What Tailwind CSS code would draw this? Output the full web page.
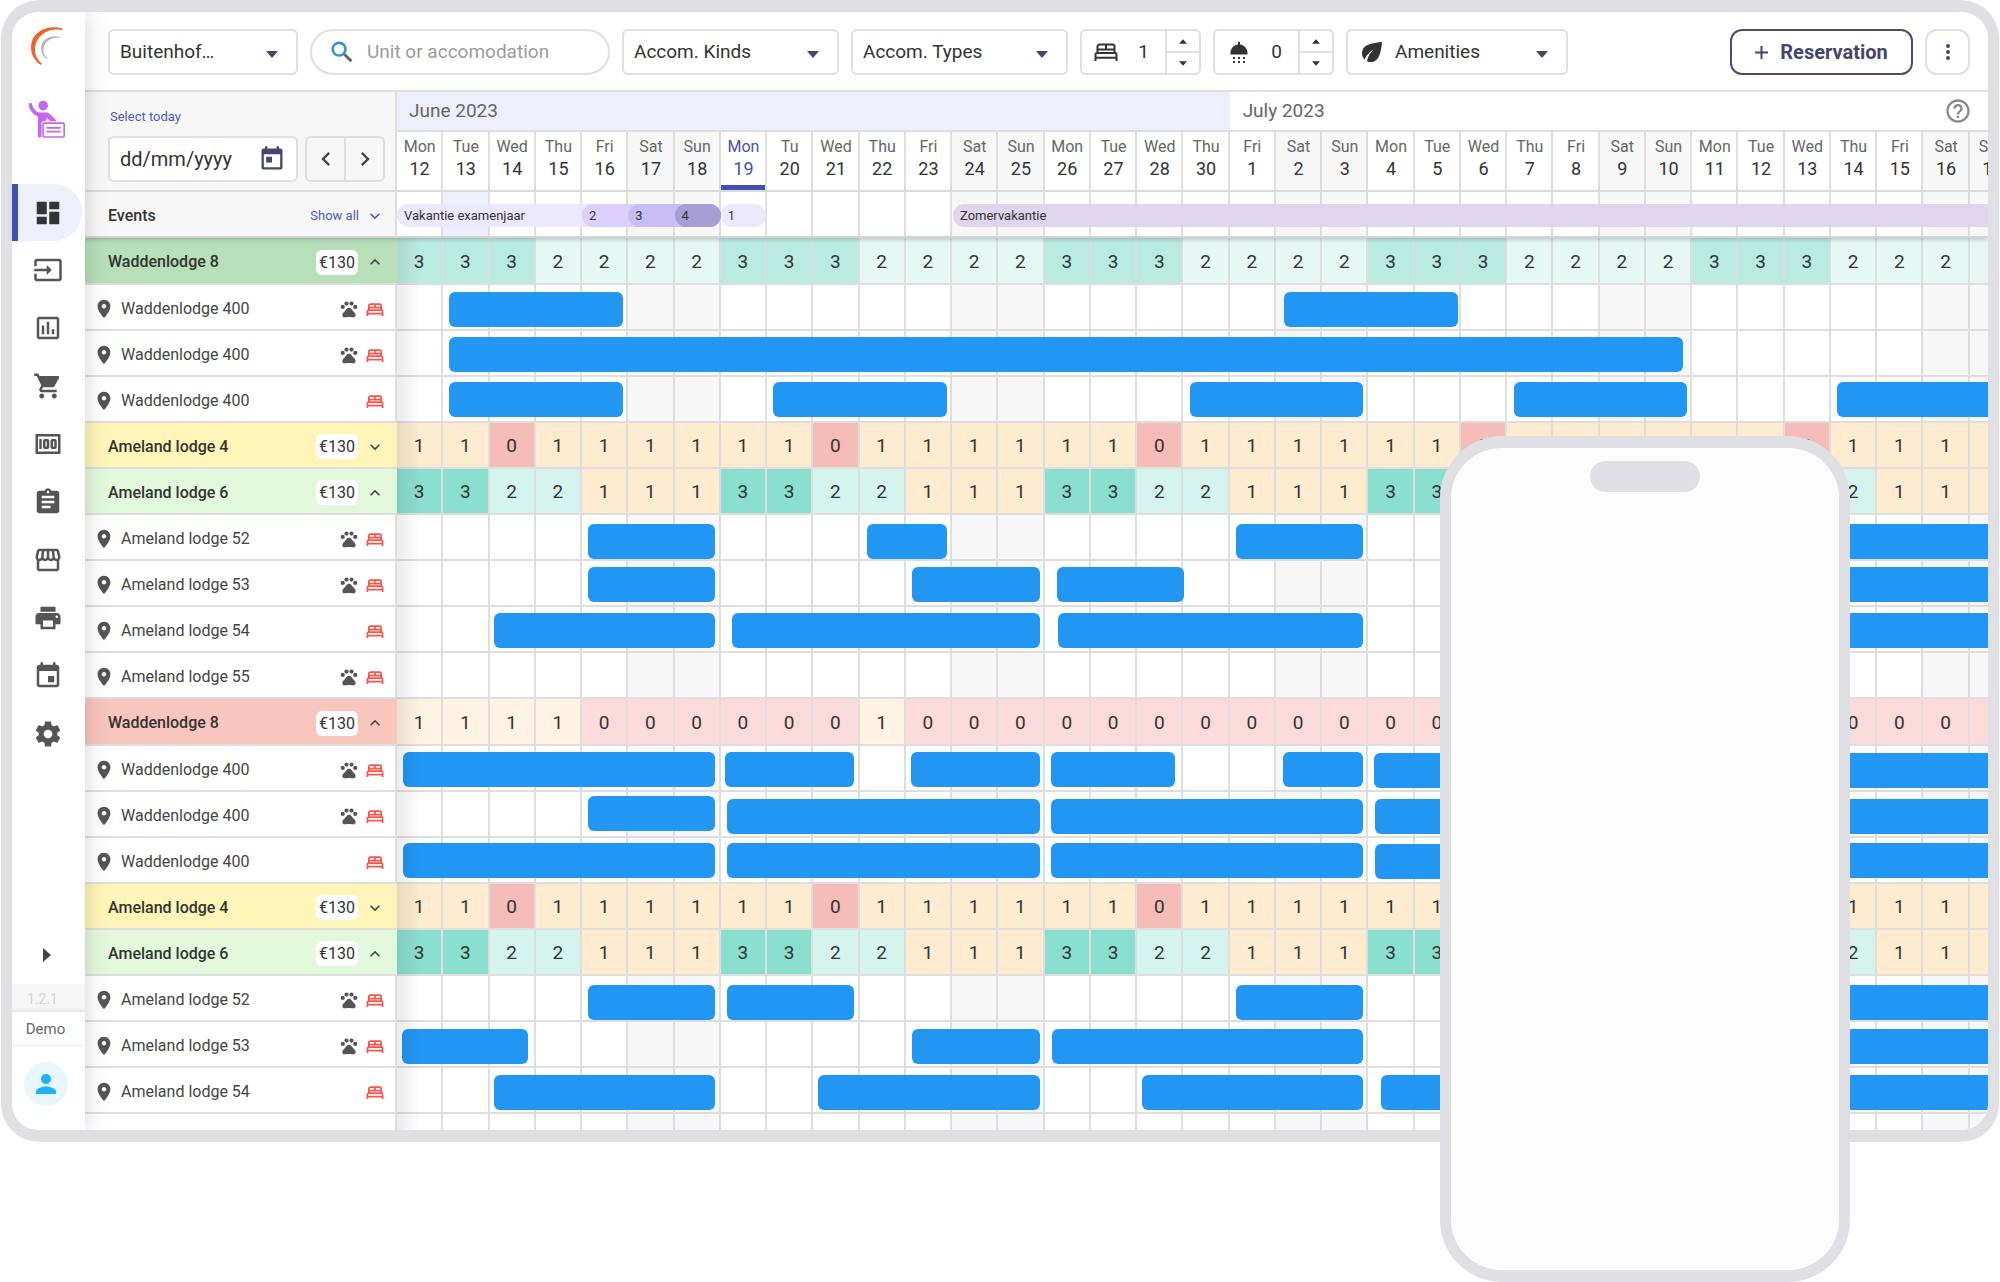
<!DOCTYPE html>
<html lang="en">
<head>
    <meta charset="UTF-8">
    <meta name="viewport" content="width=device-width, initial-scale=1.0">
    <title>Planboard</title>
    <script src="https://cdn.jsdelivr.net/npm/@tailwindcss/browser@4"></script>
</head>
<body class="relative min-h-[1282px] overflow-x-hidden bg-white font-['Roboto',sans-serif] text-[#333]">

    <!-- Icon sprite -->
    <svg class="hidden">
        <symbol id="i-dashboard" viewBox="0 0 24 24"><path d="M3 13h8V3H3v10zm0 8h8v-6H3v6zm10 0h8V11h-8v10zm0-18v6h8V3h-8z"/></symbol>
        <symbol id="i-input" viewBox="0 0 24 24"><path d="M21 3.01H3c-1.1 0-2 .9-2 2V9h2V4.99h18v14.03H3V15H1v4.01c0 1.1.9 1.98 2 1.98h18c1.1 0 2-.88 2-1.98v-14c0-1.11-.9-2-2-2zM11 16l4-4-4-4v3H1v2h10v3z"/></symbol>
        <symbol id="i-chart" viewBox="0 0 24 24"><path d="M9 17H7v-7h2v7zm4 0h-2V7h2v10zm4 0h-2v-4h2v4zm2 2H5V5h14v14zm0-16H5c-1.1 0-2 .9-2 2v14c0 1.1.9 2 2 2h14c1.1 0 2-.9 2-2V5c0-1.1-.9-2-2-2z"/></symbol>
        <symbol id="i-cart" viewBox="0 0 24 24"><path d="M7 18c-1.1 0-1.99.9-1.99 2S5.9 22 7 22s2-.9 2-2-.9-2-2-2zM1 2v2h2l3.6 7.59-1.35 2.45c-.16.28-.25.61-.25.96 0 1.1.9 2 2 2h12v-2H7.42c-.14 0-.25-.11-.25-.25l.03-.12.9-1.63h7.45c.75 0 1.41-.41 1.75-1.03l3.58-6.49A1.003 1.003 0 0 0 20 4H5.21l-.94-2H1zm16 16c-1.1 0-1.99.9-1.99 2s.89 2 1.99 2 2-.9 2-2-.9-2-2-2z"/></symbol>
        <symbol id="i-money" viewBox="0 0 24 24"><rect x="3" y="5" width="18" height="14" fill="none" stroke="currentColor" stroke-width="2"/><rect x="5" y="8" width="2" height="8"/><rect x="9" y="9" width="3" height="6" rx=".4" fill="none" stroke="currentColor" stroke-width="2"/><rect x="15" y="9" width="3" height="6" rx=".4" fill="none" stroke="currentColor" stroke-width="2"/></symbol>
        <symbol id="i-clipboard" viewBox="0 0 24 24"><path d="M19 3h-4.18C14.4 1.84 13.3 1 12 1c-1.3 0-2.4.84-2.82 2H5c-1.1 0-2 .9-2 2v14c0 1.1.9 2 2 2h14c1.1 0 2-.9 2-2V5c0-1.1-.9-2-2-2zm-7 0c.55 0 1 .45 1 1s-.45 1-1 1-1-.45-1-1 .45-1 1-1zm2 14H7v-2h7v2zm3-4H7v-2h10v2zm0-4H7V7h10v2z"/></symbol>
        <symbol id="i-store" viewBox="0 0 24 24"><path d="M21.9 8.89l-1.05-4.37c-.22-.9-1-1.52-1.91-1.52H5.05c-.9 0-1.69.63-1.9 1.52L2.1 8.89c-.24 1.02-.02 2.06.62 2.88.08.11.19.19.28.29V19c0 1.1.9 2 2 2h14c1.1 0 2-.9 2-2v-6.94c.09-.09.2-.18.28-.28.64-.82.87-1.87.62-2.89zm-2.99-3.9l1.05 4.37c.1.42.01.84-.25 1.17-.14.18-.44.47-.94.47-.61 0-1.14-.49-1.21-1.14L16.98 5l1.93-.01zM13 5h1.96l.54 4.52c.05.39-.07.78-.33 1.07-.22.26-.54.41-.95.41-.67 0-1.22-.59-1.22-1.31V5zM8.49 9.52L9.04 5H11v4.69c0 .72-.55 1.31-1.29 1.31-.34 0-.65-.15-.89-.41-.25-.29-.37-.68-.33-1.07zm-4.45-.16L5.05 5h1.97l-.58 4.86c-.08.65-.6 1.14-1.21 1.14-.49 0-.8-.29-.93-.47-.27-.32-.36-.75-.26-1.17zM5 19v-6.03c.08.01.15.03.23.03.87 0 1.66-.36 2.24-.95.6.6 1.4.95 2.31.95.87 0 1.65-.36 2.23-.93.59.57 1.39.93 2.29.93.84 0 1.64-.35 2.24-.95.58.59 1.37.95 2.24.95.08 0 .15-.02.23-.03V19H5z"/></symbol>
        <symbol id="i-print" viewBox="0 0 24 24"><path d="M19 8H5c-1.66 0-3 1.34-3 3v6h4v4h12v-4h4v-6c0-1.66-1.34-3-3-3zm-3 11H8v-5h8v5zm3-7c-.55 0-1-.45-1-1s.45-1 1-1 1 .45 1 1-.45 1-1 1zm-1-9H6v4h12V3z"/></symbol>
        <symbol id="i-event" viewBox="0 0 24 24"><path d="M17 12h-5v5h5v-5zM16 1v2H8V1H6v2H5c-1.11 0-1.99.9-1.99 2L3 19c0 1.1.89 2 2 2h14c1.1 0 2-.9 2-2V5c0-1.1-.9-2-2-2h-1V1h-2zm3 18H5V8h14v11z"/></symbol>
        <symbol id="i-today" viewBox="0 0 24 24"><path d="M19 3h-1V1h-2v2H8V1H6v2H5c-1.11 0-1.99.9-1.99 2L3 19c0 1.1.89 2 2 2h14c1.1 0 2-.9 2-2V5c0-1.1-.9-2-2-2zm0 16H5V8h14v11zM7 10h5v5H7z"/></symbol>
        <symbol id="i-settings" viewBox="0 0 24 24"><path d="M19.43 12.98c.04-.32.07-.64.07-.98s-.03-.66-.07-.98l2.11-1.65c.19-.15.24-.42.12-.64l-2-3.46c-.12-.22-.39-.3-.61-.22l-2.49 1c-.52-.4-1.08-.73-1.69-.98l-.38-2.65C14.46 2.18 14.25 2 14 2h-4c-.25 0-.46.18-.49.42l-.38 2.65c-.61.25-1.17.59-1.69.98l-2.49-1c-.23-.09-.49 0-.61.22l-2 3.46c-.13.22-.07.49.12.64l2.11 1.65c-.04.32-.07.65-.07.98s.03.66.07.98l-2.11 1.65c-.19.15-.24.42-.12.64l2 3.46c.12.22.39.3.61.22l2.49-1c.52.4 1.08.73 1.69.98l.38 2.65c.03.24.24.42.49.42h4c.25 0 .46-.18.49-.42l.38-2.65c.61-.25 1.17-.59 1.69-.98l2.49 1c.23.09.49 0 .61-.22l2-3.46c.12-.22.07-.49-.12-.64l-2.11-1.65zM12 15.5c-1.93 0-3.5-1.57-3.5-3.5s1.57-3.5 3.5-3.5 3.5 1.57 3.5 3.5-1.57 3.5-3.5 3.5z"/></symbol>
        <symbol id="i-person" viewBox="0 0 24 24"><path d="M12 12c2.21 0 4-1.79 4-4s-1.79-4-4-4-4 1.79-4 4 1.79 4 4 4zm0 2c-2.67 0-8 1.34-8 4v2h16v-2c0-2.66-5.33-4-8-4z"/></symbol>
        <symbol id="i-pin" viewBox="0 0 24 24"><path d="M12 2C8.13 2 5 5.13 5 9c0 5.25 7 13 7 13s7-7.75 7-13c0-3.87-3.13-7-7-7zm0 9.5c-1.38 0-2.5-1.12-2.5-2.5s1.12-2.5 2.5-2.5 2.5 1.12 2.5 2.5-1.12 2.5-2.5 2.5z"/></symbol>
        <symbol id="i-paw" viewBox="0 0 24 24"><circle cx="4.5" cy="9.5" r="2.5"/><circle cx="9" cy="5.5" r="2.5"/><circle cx="15" cy="5.5" r="2.5"/><circle cx="19.5" cy="9.5" r="2.5"/><path d="M17.34 14.86c-.87-1.02-1.6-1.89-2.48-2.91-.46-.54-1.05-1.08-1.75-1.32-.11-.04-.22-.07-.33-.09-.25-.04-.52-.04-.78-.04s-.53 0-.79.05c-.11.02-.22.05-.33.09-.7.24-1.28.78-1.75 1.32-.87 1.02-1.6 1.89-2.48 2.91-1.31 1.31-2.92 2.76-2.62 4.79.29 1.02 1.02 2.03 2.33 2.32.73.15 3.06-.44 5.54-.44h.18c2.48 0 4.81.58 5.54.44 1.31-.29 2.04-1.31 2.33-2.32.31-2.04-1.3-3.49-2.61-4.8z"/></symbol>
        <symbol id="i-bed" viewBox="0 0 24 18"><path fill="none" stroke="currentColor" d="M3.500 9V3.500a2 2 0 0 1 2-2h13a2 2 0 0 1 2 2V9M12 1.500v5M4.500 6.500h15M1.500 18v-6.500a1.500 1.500 0 0 1 1.500-1.500h18a1.500 1.500 0 0 1 1.500 1.500V18M1.500 14.800h21"/></symbol>
        <symbol id="i-shower" viewBox="0 0 24 24"><path d="M3.500 14.500v-1.500c0-4.500 3.200-8 7.500-8.600V2.500a1 1 0 0 1 2 0v1.900c4.300.6 7.500 4.100 7.500 8.600v1.500z"/><path d="M6 17h2v2H6zm5 0h2v2h-2zm5 0h2v2h-2zM6 21h2v2H6zm5 0h2v2h-2zm5 0h2v2h-2z"/></symbol>
        <symbol id="i-leaf" viewBox="0 0 24 24"><path d="M6.050 8.050c-2.730 2.730-2.730 7.150-.02 9.880 1.470-3.400 4.090-6.240 7.360-7.930-2.770 2.340-4.710 5.610-5.390 9.320 2.600 1.230 5.800.78 7.950-1.370C19.430 14.470 20 4 20 4S9.530 4.570 6.050 8.050z"/></symbol>
        <symbol id="i-help" viewBox="0 0 24 24"><path d="M11 18h2v-2h-2v2zm1-16C6.480 2 2 6.480 2 12s4.480 10 10 10 10-4.480 10-10S17.520 2 12 2zm0 18c-4.410 0-8-3.590-8-8s3.590-8 8-8 8 3.590 8 8-3.590 8-8 8zm0-14c-2.210 0-4 1.790-4 4h2c0-1.100.9-2 2-2s2 .9 2 2c0 2-3 1.750-3 5h2c0-2.250 3-2.500 3-5 0-2.210-1.790-4-4-4z"/></symbol>
        <symbol id="i-down" viewBox="0 0 24 24"><path d="M7.410 8.590 12 13.170l4.590-4.580L18 10l-6 6-6-6z"/></symbol>
        <symbol id="i-up" viewBox="0 0 24 24"><path d="M7.410 15.410 12 10.830l4.590 4.580L18 14l-6-6-6 6z"/></symbol>
        <symbol id="i-left" viewBox="0 0 24 24"><path d="M15.410 7.410 14 6l-6 6 6 6 1.410-1.410L10.830 12z"/></symbol>
        <symbol id="i-right" viewBox="0 0 24 24"><path d="M8.590 16.590 10 18l6-6-6-6-1.410 1.410L13.170 12z"/></symbol>
        <symbol id="i-caret" viewBox="0 0 12 7"><path d="M0 0h12L6 7z"/></symbol>
        <symbol id="i-caret-up" viewBox="0 0 12 7"><path d="M0 7h12L6 0z"/></symbol>
    </svg>

    <!-- Tablet frame -->
    <div class="mx-px flex overflow-hidden rounded-[38px] border-x-11 border-y-12 border-[#e0dfe4] bg-white">

        <!-- Sidebar -->
        <nav class="relative z-20 flex w-[73px] shrink-0 flex-col bg-white pt-[13px] shadow-[0_0_24px_rgba(0,0,0,0.18)]">
            <a href="#" aria-label="Home" class="flex h-[42px] justify-center pr-1">
                <svg class="h-[42px] w-[37px]" viewBox="50 40 110 125">
                    <path fill="#f4622c" d="M153 51C114 37 59 56 59 108c0 24 13 41 29 51l3-4C76 142 69 128 71 107 75 69 112 47 152 55z"/>
                    <path fill="#b5b5b5" d="M145 76c-31-9-56 8-56 34 0 15 8 27 18 32l1-2c-9-10-14-18-12-31 4-20 24-34 48-30z"/>
                </svg>
            </a>
            <a href="#" aria-label="Guide" class="mt-8 flex h-10 justify-center pr-1">
                <svg class="h-10 w-[38px] text-[#c765f0]" viewBox="50 260 115 117" fill="currentColor">
                    <circle cx="96" cy="278" r="14.500"/>
                    <path d="M52 271h10c2 14 9 24 22 28h24c6 2 11 7 27 23v3h-18l-9-10-4 10H96c-4 1-5 3-5 6v43H80v-63c-17-7-27-21-28-40z"/>
                    <rect x="95.500" y="331" width="64" height="42" rx="3" fill="none" stroke="currentColor" stroke-width="5"/>
                    <path d="M106 343h43v5h-43zm0 11h43v5h-43z"/>
                </svg>
            </a>
            <a href="#" aria-label="Planboard" class="mt-[45px] flex h-[57px] w-[70px] items-center justify-center rounded-r-full border-l-6 border-[#3f51b5] bg-[#edf0fa]">
                <svg class="mr-1 size-[30px] fill-[#333]"><use href="#i-dashboard"/></svg>
            </a>
            <div id="menu" class="flex flex-col pr-px text-[#555]"></div>
            <button aria-label="Expand menu" class="mt-auto flex h-[58px] items-center justify-center pr-1">
                <svg class="h-[14px] w-2 fill-[#444]" viewBox="0 0 8 14"><path d="M0 0l8 7-8 7z"/></svg>
            </button>
            <div class="flex h-7 items-center justify-center bg-[#f6f6f6] pt-px pr-3 text-sm text-[#d4d4d4] shadow-[inset_0_-4px_5px_-3px_rgba(0,0,0,0.1)]">1.2.1</div>
            <div class="flex h-[34px] items-center justify-center border-b border-[#eee] pt-px pr-[6px] text-[15px] text-[#666]">Demo</div>
            <div class="flex h-21 items-start justify-center pt-4 pr-[6px]">
                <button aria-label="Account" class="flex size-[44px] items-center justify-center rounded-full bg-[#e8f7ff]">
                    <svg class="size-[30px] fill-[#1fb1ff]"><use href="#i-person"/></svg>
                </button>
            </div>
        </nav>

        <main class="relative min-w-0 flex-1">
            <!-- Toolbar -->
            <header class="flex h-20 items-center gap-3 border-b-2 border-[#dedede] pt-[2px] pr-[18px] pl-[23px] text-[19px]">
                <label class="relative w-[190px]">
                    <select aria-label="Park" class="h-[46px] w-full appearance-none rounded-md border-2 border-[#dfdfdf] bg-white pl-[10px]"><option>Buitenhof…</option></select>
                    <svg class="pointer-events-none absolute top-[22px] right-5 h-[7px] w-3 fill-[#45466b]"><use href="#i-caret"/></svg>
                </label>
                <label class="flex h-[46px] w-[300px] items-center gap-[11px] rounded-full border-2 border-[#dfdfdf] pl-4">
                    <svg class="size-7 shrink-0" viewBox="0 0 24 24" fill="none">
                        <path stroke="#616161" stroke-width="2.500" d="M14 14l6 6"/>
                        <circle cx="9.500" cy="9.500" r="5.500" stroke="#2d94dc" stroke-width="2.200"/>
                    </svg>
                    <input type="search" aria-label="Search" placeholder="Unit or accomodation" class="w-full min-w-0 outline-none placeholder:text-[#9b9b9b]">
                </label>
                <label class="relative w-[217px]">
                    <select aria-label="Kinds" class="h-[46px] w-full appearance-none rounded-md border-2 border-[#dfdfdf] bg-white pl-[10px]"><option>Accom. Kinds</option></select>
                    <svg class="pointer-events-none absolute top-[22px] right-5 h-[7px] w-3 fill-[#45466b]"><use href="#i-caret"/></svg>
                </label>
                <label class="relative w-[217px]">
                    <select aria-label="Types" class="h-[46px] w-full appearance-none rounded-md border-2 border-[#dfdfdf] bg-white pl-[10px]"><option>Accom. Types</option></select>
                    <svg class="pointer-events-none absolute top-[22px] right-5 h-[7px] w-3 fill-[#45466b]"><use href="#i-caret"/></svg>
                </label>
                <div class="flex h-[46px] w-[121px] items-center rounded-md border-2 border-[#dfdfdf] pl-3">
                    <svg class="h-[18px] w-6 shrink-0 fill-current stroke-2"><use href="#i-bed"/></svg>
                    <input id="beds" type="text" inputmode="numeric" aria-label="Bedrooms" value="1" class="w-full min-w-0 pl-1 text-center outline-none">
                    <div class="flex h-full w-[34px] shrink-0 flex-col divide-y-2 divide-[#dfdfdf] border-l-2 border-[#dfdfdf]">
                        <button data-step="1" data-for="beds" aria-label="More bedrooms" class="flex flex-1 items-center justify-center"><svg class="h-[5px] w-2 fill-current"><use href="#i-caret-up"/></svg></button>
                        <button data-step="-1" data-for="beds" aria-label="Fewer bedrooms" class="flex flex-1 items-center justify-center"><svg class="h-[5px] w-2 fill-current"><use href="#i-caret"/></svg></button>
                    </div>
                </div>
                <div class="flex h-[46px] w-[121px] items-center rounded-md border-2 border-[#dfdfdf] pl-3">
                    <svg class="size-6 shrink-0 fill-current"><use href="#i-shower"/></svg>
                    <input id="baths" type="text" inputmode="numeric" aria-label="Bathrooms" value="0" class="w-full min-w-0 pl-1 text-center outline-none">
                    <div class="flex h-full w-[34px] shrink-0 flex-col divide-y-2 divide-[#dfdfdf] border-l-2 border-[#dfdfdf]">
                        <button data-step="1" data-for="baths" aria-label="More bathrooms" class="flex flex-1 items-center justify-center"><svg class="h-[5px] w-2 fill-current"><use href="#i-caret-up"/></svg></button>
                        <button data-step="-1" data-for="baths" aria-label="Fewer bathrooms" class="flex flex-1 items-center justify-center"><svg class="h-[5px] w-2 fill-current"><use href="#i-caret"/></svg></button>
                    </div>
                </div>
                <label class="relative w-[222px]">
                    <select aria-label="Amenities" class="h-[46px] w-full appearance-none rounded-md border-2 border-[#dfdfdf] bg-white pl-[47px]"><option>Amenities</option></select>
                    <svg class="pointer-events-none absolute top-2 left-[11px] size-[30px] fill-current"><use href="#i-leaf"/></svg>
                    <svg class="pointer-events-none absolute top-[22px] right-5 h-[7px] w-3 fill-[#45466b]"><use href="#i-caret"/></svg>
                </label>
                <button class="ml-auto flex h-[46px] w-[183px] items-center justify-center gap-3 rounded-xl border-2 border-[#4b4c70] text-xl font-bold text-[#45466b]">
                    <svg class="size-[13px]" viewBox="0 0 13 13"><path stroke="currentColor" stroke-width="2" d="M6.500 0v13M0 6.500h13"/></svg>
                    Reservation
                </button>
                <button aria-label="More" class="flex h-[46px] w-[45px] items-center justify-center rounded-xl border-2 border-[#dfdfdf]">
                    <svg class="h-4 w-1 fill-[#45466b]" viewBox="0 0 4 16"><circle cx="2" cy="2" r="2"/><circle cx="2" cy="8" r="2"/><circle cx="2" cy="14" r="2"/></svg>
                </button>
            </header>

            <!-- Date navigation and day header -->
            <div class="flex h-[100px]">
                <div class="flex w-[312px] shrink-0 flex-col gap-[11px] border-r-2 border-b-2 border-[#dedede] bg-[#f7f7f7] pt-[17px] pl-[23px]">
                    <label for="date" class="pl-[2px] text-[13px] leading-4 text-[#4a5cb8]">Select today</label>
                    <div class="flex gap-[7px]">
                        <div class="flex h-[46px] w-[190px] items-center rounded-md border-2 border-[#dfdfdf] bg-white pr-[10px] pl-[10px]">
                            <input id="date" type="text" placeholder="dd/mm/yyyy" class="w-full min-w-0 text-xl outline-none placeholder:text-[#333]">
                            <svg class="size-7 shrink-0 fill-[#45466b]"><use href="#i-today"/></svg>
                        </div>
                        <div class="flex h-[46px] w-20 divide-x-2 divide-[#dfdfdf] rounded-md border-2 border-[#dfdfdf]">
                            <button aria-label="Previous" class="flex flex-1 items-center justify-center"><svg class="size-7 fill-[#444]"><use href="#i-left"/></svg></button>
                            <button aria-label="Next" class="flex flex-1 items-center justify-center"><svg class="size-7 fill-[#444]"><use href="#i-right"/></svg></button>
                        </div>
                    </div>
                </div>
                <div class="min-w-0 flex-1 overflow-hidden">
                    <div class="-mr-7 grid h-10 grid-cols-35 border-b-2 border-[#dedede] text-[19px] text-[#666]">
                        <div class="col-span-18 flex items-center bg-[#edf0fa] pl-3">June 2023</div>
                        <div class="col-span-17 flex items-center justify-between pr-11 pl-[13px]">
                            July 2023
                            <button aria-label="Help"><svg class="size-7 fill-[#8a8a8a]"><use href="#i-help"/></svg></button>
                        </div>
                    </div>
                    <div id="days" class="-mr-7 grid h-[60px] grid-cols-35 border-b-2 border-[#dedede] text-center leading-[22px]"></div>
                </div>
            </div>

            <!-- Events -->
            <div class="relative z-10 flex h-[46px] shadow-[0_2px_4px_rgba(0,0,0,0.18)]">
                <div class="flex w-[312px] shrink-0 items-center justify-between border-r-2 border-b-2 border-[#d4d4d4] border-r-[#dedede] bg-[#f7f7f7] pt-[3px] pr-[10px] pl-[23px]">
                    <span class="font-medium">Events</span>
                    <button class="flex items-center gap-[6px] text-[13px] text-[#4a5cb8]">Show all <svg class="size-5 fill-current"><use href="#i-down"/></svg></button>
                </div>
                <div class="min-w-0 flex-1 overflow-hidden bg-white">
                    <div id="events" class="relative -mr-7 grid h-[46px] grid-cols-35 border-b-2 border-[#d4d4d4]"></div>
                </div>
            </div>

            <div id="rows" class="relative"></div>
        </main>
    </div>

    <!-- Phone frame -->
    <div class="absolute top-[436px] right-[150px] z-30 flex h-[846px] w-[410px] justify-center rounded-[62px] border-x-11 border-y-12 border-[#e0dfe4] bg-[#fcfcfc]">
        <div class="mt-[13px] h-[31px] w-[110px] rounded-full bg-[#e0dfe4]"></div>
    </div>

    <script>
        const MENU = ['input', 'chart', 'cart', 'money', 'clipboard', 'store', 'print', 'event', 'settings'];
        const NAMES = ['Mon', 'Tue', 'Wed', 'Thu', 'Fri', 'Sat', 'Sun'];
        const DATES = [12, 13, 14, 15, 16, 17, 18, 19, 20, 21, 22, 23, 24, 25, 26, 27, 28, 30,
            1, 2, 3, 4, 5, 6, 7, 8, 9, 10, 11, 12, 13, 14, 15, 16, 17];
        const TODAY = 7;

        // The last day is only half in view and carries no count
        const repeat = week => week.repeat(5).slice(0, 34);

        // Availability colours per group palette
        const PALETTE = {
            green:  { label: 'bg-[#b7e0b9]', last: 'bg-[#e6f8f4]', cells: { 3: 'bg-[#baebe1]', 2: 'bg-[#e6f8f4]' } },
            yellow: { label: 'bg-[#fff5b8]', last: 'bg-[#feebd0]', cells: { 1: 'bg-[#feebd0]', 0: 'bg-[#f5bcb8]' } },
            lime:   { label: 'bg-[#e2fadb]', last: 'bg-[#feebd0]', cells: { 3: 'bg-[#8bdfce]', 2: 'bg-[#d5f4ed]', 1: 'bg-[#feebd0]' } },
            red:    { label: 'bg-[#f9c6be]', last: 'bg-[#fadbd9]', cells: { 1: 'bg-[#fff4e4]', 0: 'bg-[#fadbd9]' } },
        };

        // bars: [start day, end day, top offset]
        const ROWS = [
            { group: 'Waddenlodge 8', tone: 'green', open: true, tall: true, counts: repeat('3332222') },
            { unit: 'Waddenlodge 400', pets: true, bars: [[1.12, 4.88, 7], [19.17, 22.93, 7]] },
            { unit: 'Waddenlodge 400', pets: true, bars: [[1.12, 27.81, 6]] },
            { unit: 'Waddenlodge 400', bars: [[1.12, 4.88, 5], [8.13, 11.88, 5], [17.14, 20.89, 5], [24.14, 27.89, 5], [31.14, 36, 5]] },
            { group: 'Ameland lodge 4', tone: 'yellow', counts: repeat('1101111') },
            { group: 'Ameland lodge 6', tone: 'lime', open: true, counts: repeat('3322111') },
            { unit: 'Ameland lodge 52', pets: true, bars: [[4.13, 6.88, 9], [10.16, 11.88, 9], [18.14, 20.89, 9], [30, 36, 9]] },
            { unit: 'Ameland lodge 53', pets: true, bars: [[4.13, 6.88, 6], [11.14, 13.89, 6], [14.27, 17.01, 6], [30, 36, 6]] },
            { unit: 'Ameland lodge 54', bars: [[2.1, 6.88, 6], [7.25, 13.89, 6], [14.3, 20.89, 6], [30, 36, 6]] },
            { unit: 'Ameland lodge 55', pets: true, bars: [] },
            { group: 'Waddenlodge 8', tone: 'red', open: true, tall: true, counts: '1111000000100000000000000000000000' },
            { unit: 'Waddenlodge 400', pets: true, bars: [[0.13, 6.88, 6], [7.1, 9.88, 6], [11.11, 13.89, 6], [14.14, 16.81, 6], [19.15, 20.89, 6], [21.12, 25, 7], [30, 36, 7]] },
            { unit: 'Waddenlodge 400', pets: true, bars: [[4.13, 6.88, 4], [7.13, 13.89, 7], [14.14, 20.89, 7], [21.14, 25, 7], [30, 36, 7]] },
            { unit: 'Waddenlodge 400', bars: [[0.13, 6.88, 5], [7.13, 13.89, 5], [14.14, 20.89, 5], [21.14, 25, 6], [30, 36, 5]] },
            { group: 'Ameland lodge 4', tone: 'yellow', counts: repeat('1101111') },
            { group: 'Ameland lodge 6', tone: 'lime', open: true, counts: repeat('3322111') },
            { unit: 'Ameland lodge 52', pets: true, bars: [[4.13, 6.88, 9], [7.13, 9.88, 9], [18.14, 20.89, 9], [30, 36, 9]] },
            { unit: 'Ameland lodge 53', pets: true, bars: [[0.1, 2.84, 7], [11.14, 13.89, 7], [14.17, 20.89, 7], [30, 36, 7]] },
            { unit: 'Ameland lodge 54', bars: [[2.1, 6.88, 7], [9.1, 13.89, 7], [16.1, 20.89, 7], [21.28, 25, 7], [30, 36, 7]] },
        ];

        const EVENTS = [
            ['Vakantie examenjaar', 0, 7, 'bg-[#ece8fd] rounded-full'],
            ['2', 4, 7, 'bg-[#dcd1fd] rounded-full'],
            ['3', 5, 7, 'bg-[#c8bdf4] rounded-full'],
            ['4', 6, 7, 'bg-[#a79ed6] rounded-full'],
            ['1', 7, 7.97, 'bg-[#ece8fd] rounded-full'],
            ['Zomervakantie', 12.02, 36, 'bg-[#ddd6ee] rounded-l-full'],
        ];

        const icon = (name, cls) => `<svg class="${cls}"><use href="#i-${name}"/></svg>`;
        const isWeekend = i => i % 7 > 4;
        const span = (from, to) => `left:${from / 35 * 100}%;width:${(to - from) / 35 * 100}%`;
        const el = id => document.getElementById(id);

        el('menu').innerHTML = MENU.map(name =>
            `<a href="#" aria-label="${name}" class="flex h-[58px] items-center justify-center">${icon(name, 'size-[30px] fill-current')}</a>`
        ).join('');

        el('days').innerHTML = DATES.map((date, i) => {
            const name = i === 8 ? 'Tu' : NAMES[i % 7];
            const today = i === TODAY;
            return `<div class="border-r-2 border-[#dedede] pt-1 ${isWeekend(i) ? 'bg-[#f7f7f7]' : ''}">
                <div class="h-full pl-px ${today ? 'border-b-5 border-[#3f51b5] text-[#3f51b5]' : ''}">
                    <div class="text-base/[22px] ${today ? '' : 'text-[#666]'}">${name}</div>
                    <div class="text-lg/[22px]">${date}</div>
                </div>
            </div>`;
        }).join('');

        const blankCells = DATES.map((_, i) =>
            `<div class="border-r-2 border-[#dedede] ${isWeekend(i) ? 'bg-[#f7f7f7]' : ''}"></div>`
        ).join('');

        el('events').innerHTML = DATES.map((_, i) =>
            `<div class="border-r-2 border-[#dedede] ${i === 1 ? 'bg-[#edf0fa]' : isWeekend(i) ? 'bg-[#f7f7f7]' : ''}"></div>`
        ).join('') + EVENTS.map(([text, from, to, cls]) =>
            `<div class="absolute top-3 h-[23px] pl-[7px] text-[13px] leading-[23px] ${cls}" style="${span(from, to)}">${text}</div>`
        ).join('');

        function groupRow(row) {
            const tone = PALETTE[row.tone];
            const cells = [...row.counts].map(n =>
                `<div class="flex items-center justify-center border-r-2 border-[#dedede] pt-[3px] ${tone.cells[n]}">${n}</div>`
            ).join('') + `<div class="${tone.last}"></div>`;
            return `<div class="flex ${row.tall ? 'h-[47px]' : 'h-[46px]'}">
                <div class="flex w-[312px] shrink-0 items-center gap-[7px] border-b-2 border-[#dedede] pt-[3px] pr-3 pl-[23px] ${tone.label}">
                    <span class="flex-1 font-medium">${row.group}</span>
                    <span class="rounded-md bg-white px-[3px] leading-[25px]">€130</span>
                    <button aria-label="Toggle ${row.group}">${icon(row.open ? 'up' : 'down', 'size-5 fill-[#444]')}</button>
                </div>
                <div class="min-w-0 flex-1 overflow-hidden">
                    <div class="-mr-7 grid h-full grid-cols-35 border-b-2 border-[#dedede] text-[19px]">${cells}</div>
                </div>
            </div>`;
        }

        function unitRow(row) {
            const bars = row.bars.map(([from, to, top]) =>
                `<div class="absolute h-[35px] rounded-md bg-[#2196f3]" style="${span(from, to)};top:${top}px"></div>`
            ).join('');
            return `<div class="flex h-[46px]">
                <div class="flex w-[312px] shrink-0 items-center gap-[6px] border-r-2 border-b-2 border-[#dedede] pt-1 pr-[10px] pl-2 text-[#444]">
                    ${icon('pin', 'size-[22px] fill-[#555]')}
                    <span class="flex-1">${row.unit}</span>
                    ${row.pets ? icon('paw', 'size-5 fill-[#555]') : ''}
                    ${icon('bed', 'h-[13px] w-5 fill-current stroke-[2.4] text-[#f8564a]')}
                </div>
                <div class="min-w-0 flex-1 overflow-hidden">
                    <div class="relative -mr-7 grid h-full grid-cols-35 border-b-2 border-[#dedede]">${blankCells}${bars}</div>
                </div>
            </div>`;
        }

        el('rows').innerHTML = ROWS.map(row => row.group ? groupRow(row) : unitRow(row)).join('') +
            `<div class="flex h-4">
                <div class="w-[312px] shrink-0 border-r-2 border-[#dedede]"></div>
                <div class="min-w-0 flex-1 overflow-hidden"><div class="-mr-7 grid h-full grid-cols-35">${blankCells}</div></div>
            </div>
            <div class="pointer-events-none absolute inset-y-0 left-[312px] w-6 bg-linear-to-r from-black/8 to-transparent"></div>`;

        // Number steppers
        document.querySelectorAll('[data-step]').forEach(button => {
            button.addEventListener('click', () => {
                const input = el(button.dataset.for);
                input.value = Math.max(0, (parseInt(input.value) || 0) + Number(button.dataset.step));
            });
        });
    </script>
</body>
</html>
